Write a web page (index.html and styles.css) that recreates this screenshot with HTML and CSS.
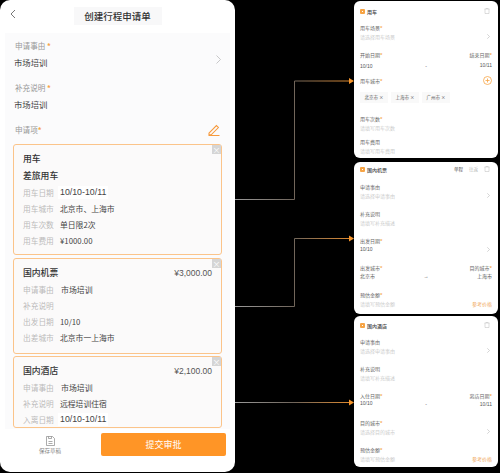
FILE: index.html
```html
<!DOCTYPE html>
<html lang="zh">
<head>
  <meta charset="UTF-8">
  <meta name="viewport" content="width=device-width, initial-scale=1.0">
  <title>创建行程申请单</title>
  <link rel="stylesheet" href="styles.css">
</head>
<body>
<div class="board">
  <div class="phone">
    <div class="nav">
      <svg class="back" width="6" height="10" viewBox="0 0 6 10"><path d="M5 1L1 5l4 4" fill="none" stroke="#777" stroke-width="1"/></svg>
      <span class="nav-title">创建行程申请单</span>
    </div>
    <div class="sheet">
      <div class="form-item">
        <div class="form-label">申请事由 <em>*</em></div>
        <div class="form-row">
          <div class="form-value">市场培训</div>
          <svg width="5" height="9" viewBox="0 0 5 9"><path d="M.5.5l4 4-4 4" fill="none" stroke="#bbb" stroke-width=".8"/></svg>
        </div>
      </div>
      <div class="form-item second">
        <div class="form-label">补充说明 <em>*</em></div>
        <div class="form-value">市场培训</div>
      </div>
      <div class="items-head">
        <div class="form-label">申请项<em>*</em></div>
        <svg width="12" height="12" viewBox="0 0 12 12"><path d="M1 9.200L8.400 1.600l2 2L3.200 10.800H1zM.5 11.500h11" fill="none" stroke="#f79a3c" stroke-width="1.100"/></svg>
      </div>

      <div class="card card-car">
        <span class="card-close">×</span>
        <div class="card-title">用车</div>
        <div class="card-sub">差旅用车</div>
        <div class="card-row"><span>用车日期</span><b class="hl">10/10-10/11</b></div>
        <div class="card-row"><span>用车城市</span><b>北京市、上海市</b></div>
        <div class="card-row"><span>用车次数</span><b>单日限2次</b></div>
        <div class="card-row"><span>用车费用</span><b>¥1000.00</b></div>
      </div>

      <div class="card card-air">
        <span class="card-close">×</span>
        <div class="card-head"><div class="card-title">国内机票</div><div class="price">¥3,000.00</div></div>
        <div class="card-row"><span>申请事由</span><b class="big">市场培训</b></div>
        <div class="card-row"><span>补充说明</span></div>
        <div class="card-row"><span>出发日期</span><b>10/10</b></div>
        <div class="card-row"><span>出差城市</span><b>北京市一上海市</b></div>
      </div>

      <div class="card card-hotel">
        <span class="card-close">×</span>
        <div class="card-head"><div class="card-title">国内酒店</div><div class="price">¥2,100.00</div></div>
        <div class="card-row"><span>申请事由</span><b class="big">市场培训</b></div>
        <div class="card-row"><span>补充说明</span><b>远程培训住宿</b></div>
        <div class="card-row"><span>入离日期</span><b class="hl">10/10-10/11</b></div>
      </div>
    </div>
    <div class="footer">
      <div class="draft">
        <svg width="9" height="10" viewBox="0 0 9 10"><path d="M.5.5h6l2 2v7h-8zM2.500 5.500h4M2.500 7.500h4M2.500.5v2h3v-2" fill="none" stroke="#888" stroke-width=".7"/></svg>
        <span>保存草稿</span>
      </div>
      <button class="submit">提交审批</button>
    </div>
  </div>

  <div class="panels">
    <div class="panel panel-car">
      <div class="panel-head">
        <i class="tag-icon"></i><span class="panel-name">用车</span>
        <svg class="trash" width="6" height="6" viewBox="0 0 6 6"><path d="M.5 1h5M1 1v4.500h4V1M2 1V.4h2V1" fill="none" stroke="#bbb" stroke-width=".5"/></svg>
      </div>
      <div class="field"><div class="f-label">用车场景<em>*</em></div>
        <div class="f-row"><span class="f-hint">请选择用车场景</span><svg class="chev" width="3" height="5" viewBox="0 0 3 5"><path d="M.3.3l2.200 2.200L.3 4.700" fill="none" stroke="#aaa" stroke-width=".5"/></svg></div></div>
      <div class="field f-gap-car1">
        <div class="f-split"><span class="f-label">开始日期<em>*</em></span><span class="f-label">结束日期<em>*</em></span></div>
        <div class="f-split date-vals"><span class="f-val">10/10</span><span class="f-val">-</span><span class="f-val lift">10/11</span></div>
      </div>
      <div class="f-city">
        <div class="f-label">用车城市<em>*</em></div>
        <svg width="9" height="9" viewBox="0 0 9 9"><circle cx="4.500" cy="4.500" r="4" fill="none" stroke="#f7a445" stroke-width=".8"/><path d="M4.500 2.500v4M2.500 4.500h4" stroke="#f7a445" stroke-width=".8"/></svg>
      </div>
      <div class="tags">
        <span class="tag">北京市 ×</span><span class="tag">上海市 ×</span><span class="tag">广州市 ×</span>
      </div>
      <div class="field f-gap-car2"><div class="f-label">用车次数<em>*</em></div><div class="f-hint">请填写用车次数</div></div>
      <div class="field f-gap-car3"><div class="f-label">用车费用</div><div class="f-hint">请填写用车费用</div></div>
    </div>

    <div class="panel panel-air">
      <div class="panel-head">
        <i class="tag-icon"></i><span class="panel-name">国内机票</span>
        <span class="trip on">单程</span><span class="trip">往返</span>
        <svg class="trash" width="6" height="6" viewBox="0 0 6 6"><path d="M.5 1h5M1 1v4.500h4V1M2 1V.4h2V1" fill="none" stroke="#bbb" stroke-width=".5"/></svg>
      </div>
      <div class="field"><div class="f-label">申请事由</div>
        <div class="f-row"><span class="f-hint">请选择申请事由</span><svg class="chev" width="3" height="5" viewBox="0 0 3 5"><path d="M.3.3l2.200 2.200L.3 4.700" fill="none" stroke="#aaa" stroke-width=".5"/></svg></div></div>
      <div class="field f-gap"><div class="f-label">补充说明</div><div class="f-hint">请填写补充描述</div></div>
      <div class="field f-gap"><div class="f-label">出发日期<em>*</em></div>
        <div class="f-row"><span class="f-val">10/10</span><svg class="chev" width="3" height="5" viewBox="0 0 3 5"><path d="M.3.3l2.200 2.200L.3 4.700" fill="none" stroke="#aaa" stroke-width=".5"/></svg></div></div>
      <div class="field f-gap">
        <div class="f-split"><span class="f-label">出发城市<em>*</em></span><span class="f-label">目的城市<em>*</em></span></div>
        <div class="f-split"><span class="f-val">北京市</span><span class="f-val">→</span><span class="f-val">上海市</span></div>
      </div>
      <div class="field f-gap"><div class="f-label">预估金额<em>*</em></div>
        <div class="f-row"><span class="f-hint">请填写预估金额</span><span class="f-link">参考价格</span></div></div>
    </div>

    <div class="panel panel-hotel">
      <div class="panel-head">
        <i class="tag-icon"></i><span class="panel-name">国内酒店</span>
        <svg class="trash" width="6" height="6" viewBox="0 0 6 6"><path d="M.5 1h5M1 1v4.500h4V1M2 1V.4h2V1" fill="none" stroke="#bbb" stroke-width=".5"/></svg>
      </div>
      <div class="field"><div class="f-label">申请事由</div>
        <div class="f-row"><span class="f-hint">请选择申请事由</span><svg class="chev" width="3" height="5" viewBox="0 0 3 5"><path d="M.3.3l2.200 2.200L.3 4.700" fill="none" stroke="#aaa" stroke-width=".5"/></svg></div></div>
      <div class="field f-gap"><div class="f-label">补充说明</div><div class="f-hint">请填写补充描述</div></div>
      <div class="field f-gap">
        <div class="f-split"><span class="f-label">入住日期<em>*</em></span><span class="f-label">离店日期<em>*</em></span></div>
        <div class="f-split"><span class="f-val lift">10/10</span><span class="f-val">-</span><span class="f-val">10/11</span></div>
      </div>
      <div class="field f-gap"><div class="f-label">目的城市<em>*</em></div>
        <div class="f-row"><span class="f-hint">请选择目的城市</span><svg class="chev" width="3" height="5" viewBox="0 0 3 5"><path d="M.3.3l2.200 2.200L.3 4.700" fill="none" stroke="#aaa" stroke-width=".5"/></svg></div></div>
      <div class="field f-gap"><div class="f-label">预估金额<em>*</em></div>
        <div class="f-row"><span class="f-hint">请填写预估金额</span><span class="f-link">参考价格</span></div></div>
    </div>
  </div>

  <!-- connectors between the form and the detail panels -->
  <svg class="links" width="500" height="473" viewBox="0 0 500 473">
    <defs>
      <linearGradient id="fade" gradientUnits="userSpaceOnUse" x1="235" y1="0" x2="352" y2="0">
        <stop offset="0" stop-color="#9a9a9a"/>
        <stop offset=".5" stop-color="#6f655b"/>
        <stop offset="1" stop-color="#e08a2e"/>
      </linearGradient>
    </defs>
    <path d="M235 199.500H294.500V81H350M235 306.500H294.500V238.500H350M235 402.500H350" fill="none" stroke="url(#fade)" stroke-width="1"/>
    <path d="M349 78l5 3-5 3zM349 235.500l5 3-5 3zM349 399.500l5 3-5 3z" fill="#f7962b"/>
  </svg>
</div>
</body>
</html>
```

FILE: styles.css
```css
* {
  box-sizing: border-box;
}

html, body {
  margin: 0;
  height: 100%;
  background-color: #000;
  overflow: hidden;
}

body {
  font-family: "Noto Sans CJK SC", "Noto Sans", sans-serif;
  color: #333;
}

em {
  font-style: normal;
  font-weight: 700;
  color: #f7a445;
}

.board {
  position: relative;
  display: flex;
  justify-content: space-between;
  width: 500px;
  height: 473px;
}

/* left phone */
.phone {
  width: 235px;
  height: 472px;
  background-color: #fff;
  border-radius: 10px;
  display: flex;
  flex-direction: column;
  overflow: hidden;
}

.nav {
  position: relative;
  height: 33px;
  display: flex;
  justify-content: center;
  padding-top: 7px;
}

.back {
  position: absolute;
  left: 10px;
  top: 9px;
}

.nav-title {
  width: 88px;
  height: 18px;
  line-height: 18px;
  background-color: #f8f8f9;
  text-align: center;
  font-size: 9.500px;
  font-weight: 500;
  white-space: nowrap;
}

.sheet {
  flex: 1;
  margin: 0 5px;
  padding: 6px 8px 0;
  background-color: #fbfbfc;
}

.form-label {
  font-size: 7.600px;
  line-height: 14px;
  color: #999;
  padding-left: 2px;
}

.form-value {
  font-size: 8.400px;
  line-height: 16px;
  color: #444;
  margin-top: 1px;
  padding-left: 1px;
}

.form-row {
  display: flex;
  justify-content: space-between;
  align-items: center;
  padding-right: 2px;
}

.form-row svg {
  margin-right: -1px;
  margin-top: -4px;
}

.second {
  margin-top: 11px;
}

.items-head {
  display: flex;
  justify-content: space-between;
  align-items: center;
  margin-top: 11px;
  height: 14px;
  padding-right: 2px;
}

.card {
  position: relative;
  width: 209px;
  padding: 6px 9px 0;
  margin-top: 3px;
  background-color: #fbfafa;
  border: 1px solid #fbc48a;
  border-radius: 3px;
}

.card-car {
  height: 111px;
  margin-top: 7px;
}

.card-air {
  height: 96px;
}

.card-hotel {
  height: 72px;
  margin-top: 2px;
}

.card-close {
  position: absolute;
  top: 0;
  right: 0;
  width: 9px;
  height: 9px;
  line-height: 9px;
  background-color: #d5d5d5;
  color: #fff;
  text-align: center;
  font-size: 8px;
}

.card-head {
  display: flex;
  justify-content: space-between;
  align-items: center;
}

.card-title {
  font-size: 8.800px;
  line-height: 16px;
  font-weight: 500;
  color: #333;
}

.price {
  font-family: "Liberation Sans", sans-serif;
  font-size: 8.500px;
  color: #555;
}

.card-sub {
  font-size: 8.800px;
  line-height: 16px;
  margin-top: 1px;
  font-weight: 500;
}

.card-row {
  display: flex;
  align-items: center;
  height: 16px;
  font-size: 7.700px;
}

.card-row span {
  width: 37px;
  color: #bbb;
  white-space: nowrap;
}

.card-row b {
  font-weight: 400;
  color: #444;
  white-space: nowrap;
  font-size: 7.800px;
}

.card-row b.big {
  font-size: 7.900px;
  margin-left: 1px;
}

.card-row b.hl {
  background-color: #fff;
  padding: 0 2px;
  margin-left: -2px;
  line-height: 13px;
  font-size: 8.800px;
  font-family: "Liberation Sans", sans-serif;
}

/* bottom bar */
.footer {
  height: 43px;
  display: flex;
  align-items: flex-start;
  justify-content: space-between;
  padding: 4px 9px 0 39px;
}

.draft {
  display: flex;
  flex-direction: column;
  align-items: center;
  padding-top: 3px;
  font-size: 5.500px;
  line-height: 11px;
  color: #888;
}

.submit {
  width: 125px;
  height: 23px;
  border: none;
  border-radius: 2px;
  background-color: #ff9526;
  color: #fff;
  font-family: inherit;
  font-size: 9px;
  padding: 0;
}

/* detail panels */
.panels {
  width: 146px;
  padding: 1px 2px 0 0;
  display: flex;
  flex-direction: column;
}

.panel {
  background-color: #fff;
  border-radius: 6px;
  padding: 5px 6px 0;
}

.panel-car {
  height: 157px;
}

.panel-air {
  height: 152px;
  margin-top: 4px;
  padding-top: 2px;
}

.panel-air .panel-head {
  margin-bottom: 8px;
}

.panel-hotel {
  height: 151px;
  margin-top: 2px;
  padding-top: 4px;
}

.panel-head {
  display: flex;
  align-items: center;
  height: 10px;
  margin-bottom: 7px;
}

.tag-icon {
  width: 5px;
  height: 5px;
  flex-shrink: 0;
  border: 2px solid #f7a445;
  background-color: #fff;
  border-radius: 1px;
  margin-right: 2px;
}

.panel-name {
  font-size: 5px;
  font-weight: 500;
  color: #444;
  flex: 1;
}

.trip {
  font-size: 4.500px;
  color: #bbb;
  margin-right: 6px;
}

.trip.on {
  color: #555;
}

.trash {
  margin-right: 2px;
}

.f-label {
  font-size: 5px;
  line-height: 9px;
  color: #666;
}

.f-hint {
  font-size: 5px;
  line-height: 9px;
  color: #ccc;
}

.f-val {
  font-family: "Liberation Sans", "Noto Sans CJK SC", sans-serif;
  font-size: 5px;
  line-height: 9px;
  color: #555;
}

.date-vals {
  margin-top: 3px;
}

.lift {
  margin-top: -2px;
}

.f-link {
  font-size: 5px;
  line-height: 9px;
  color: #f0a85c;
}

.f-row, .f-split {
  display: flex;
  justify-content: space-between;
  align-items: center;
}

.chev {
  margin-right: 2px;
}

.f-gap {
  margin-top: 9px;
}

.f-gap-car1 {
  margin-top: 9px;
}

.f-city {
  display: flex;
  justify-content: space-between;
  align-items: center;
  margin-top: 5px;
}

.tags {
  display: flex;
  gap: 3px;
  margin-top: 7px;
}

.tag {
  width: 28px;
  height: 11px;
  line-height: 11px;
  text-align: center;
  background-color: #f9f9f9;
  font-size: 4.500px;
  color: #555;
  white-space: nowrap;
}

.f-gap-car2 {
  margin-top: 11px;
}

.f-gap-car3 {
  margin-top: 5px;
}

/* overlay, only for the arrows */
.links {
  position: absolute;
  left: 0;
  top: 0;
  pointer-events: none;
}
```
